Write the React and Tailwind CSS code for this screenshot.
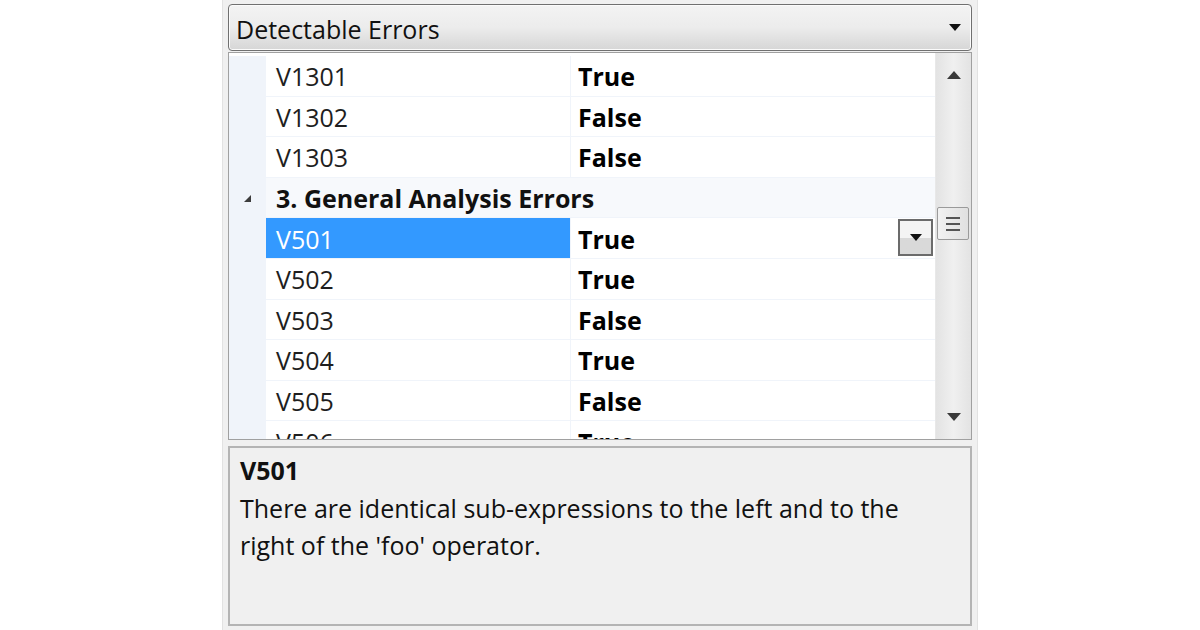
import React from "react";

const font = { fontFamily: '"Open Sans", "Noto Sans", sans-serif' };

const rowsTop = [
  { name: "V1301", value: "True" },
  { name: "V1302", value: "False" },
  { name: "V1303", value: "False" },
];

const rowsBottom = [
  { name: "V501", value: "True", selected: true },
  { name: "V502", value: "True" },
  { name: "V503", value: "False" },
  { name: "V504", value: "True" },
  { name: "V505", value: "False" },
  { name: "V506", value: "True" },
];

const Row = ({ name, value, selected }) => (
  <div className="flex h-[40.6px] shrink-0">
    <div className="w-[37px] shrink-0 bg-[#f0f4fa]" />
    <div
      className={`w-[304px] shrink-0 flex items-center pl-[10px] pt-[2px] border-b border-[#f0f4fa] ${
        selected ? "bg-[#3399ff] text-white" : "text-[#1e1e1e]"
      }`}
    >
      {name}
    </div>
    <div className="flex-1 flex items-center pl-[7px] pt-[2px] font-bold border-l border-b border-[#f0f4fa] relative">
      {value}
      {selected && (
        <div className="absolute right-[2px] top-[1px] w-[35px] h-[37px] border-2 border-[#6b6b6b] bg-gradient-to-b from-[#f4f4f4] from-50% to-[#d9d9d9] to-50% flex items-center justify-center">
          <svg width="12" height="7" viewBox="0 0 12 7">
            <path d="M0 0 L12 0 L6 7 Z" fill="#111" />
          </svg>
        </div>
      )}
    </div>
  </div>
);

export default function App() {
  return (
    <div className="w-[1200px] h-[630px] bg-white flex justify-center" style={font}>
      <div className="w-[756px] h-full bg-[#f0f0f0] border-x border-[#e2e2e2] px-[5px] pt-[4px] flex flex-col text-[25px] leading-none">
        {/* combo box */}
        <div className="h-[47px] shrink-0 rounded-[4px] border border-[#707070] bg-gradient-to-b from-[#f3f3f3] via-[#ececec] to-[#d6d6d6] flex items-center justify-between pl-[7px] pr-[10px] shadow-[inset_0_0_0_1px_#fbfbfb]">
          <span className="text-[#111] pt-[3px]">Detectable Errors</span>
          <svg width="12" height="7" viewBox="0 0 12 7">
            <path d="M0 0 L12 0 L6 7 Z" fill="#111" />
          </svg>
        </div>

        {/* grid */}
        <div className="mt-[1px] h-[388px] shrink-0 border border-[#a0a0a0] bg-white flex overflow-hidden">
          <div className="flex-1 flex flex-col pt-[3px] overflow-hidden">
            {rowsTop.map((r) => (
              <Row key={r.name} {...r} />
            ))}
            <div className="flex h-[40.6px] shrink-0 bg-[#f7f9fc]">
              <div className="w-[37px] shrink-0 bg-[#f0f4fa] flex items-center justify-center">
                <svg width="9" height="9" viewBox="0 0 9 9">
                  <path d="M8 1 L8 8 L1 8 Z" fill="#3c3c3c" />
                </svg>
              </div>
              <div className="flex-1 flex items-center pl-[10px] pt-[2px] font-bold text-[#111] border-b border-[#f0f4fa]">
                3. General Analysis Errors
              </div>
            </div>
            {rowsBottom.map((r) => (
              <Row key={r.name} {...r} />
            ))}
          </div>

          {/* scrollbar */}
          <div className="w-[36px] shrink-0 bg-gradient-to-r from-[#e3e3e3] via-[#f0f0f0] to-[#e3e3e3] border-l border-[#e8e8e8] flex flex-col items-center relative">
            <div className="h-[44px] flex items-center justify-center">
              <svg width="14" height="8" viewBox="0 0 14 8">
                <path d="M0 8 L7 0 L14 8 Z" fill="#3a3a3a" />
              </svg>
            </div>
            <div className="absolute top-[154px] left-[1px] w-[32px] h-[33px] rounded-[2px] border border-[#9a9a9a] bg-gradient-to-r from-[#f2f2f2] to-[#e0e0e0] flex flex-col items-center justify-center gap-[4px]">
              <div className="w-[14px] h-[2px] bg-[#555]" />
              <div className="w-[14px] h-[2px] bg-[#555]" />
              <div className="w-[14px] h-[2px] bg-[#555]" />
            </div>
            <div className="mt-auto h-[40px] flex items-center justify-center pb-[4px]">
              <svg width="14" height="8" viewBox="0 0 14 8">
                <path d="M0 0 L14 0 L7 8 Z" fill="#3a3a3a" />
              </svg>
            </div>
          </div>
        </div>

        {/* description */}
        <div className="mt-[6px] h-[180px] shrink-0 border-2 border-[#b4b4b4] bg-[#f0f0f0] px-[10px] pt-[8px] text-[#111]">
          <div className="font-bold leading-[28px]">V501</div>
          <div className="mt-[6px] leading-[37px]">
            There are identical sub-expressions to the left and to the
            <br />
            right of the 'foo' operator.
          </div>
        </div>
      </div>
    </div>
  );
}
